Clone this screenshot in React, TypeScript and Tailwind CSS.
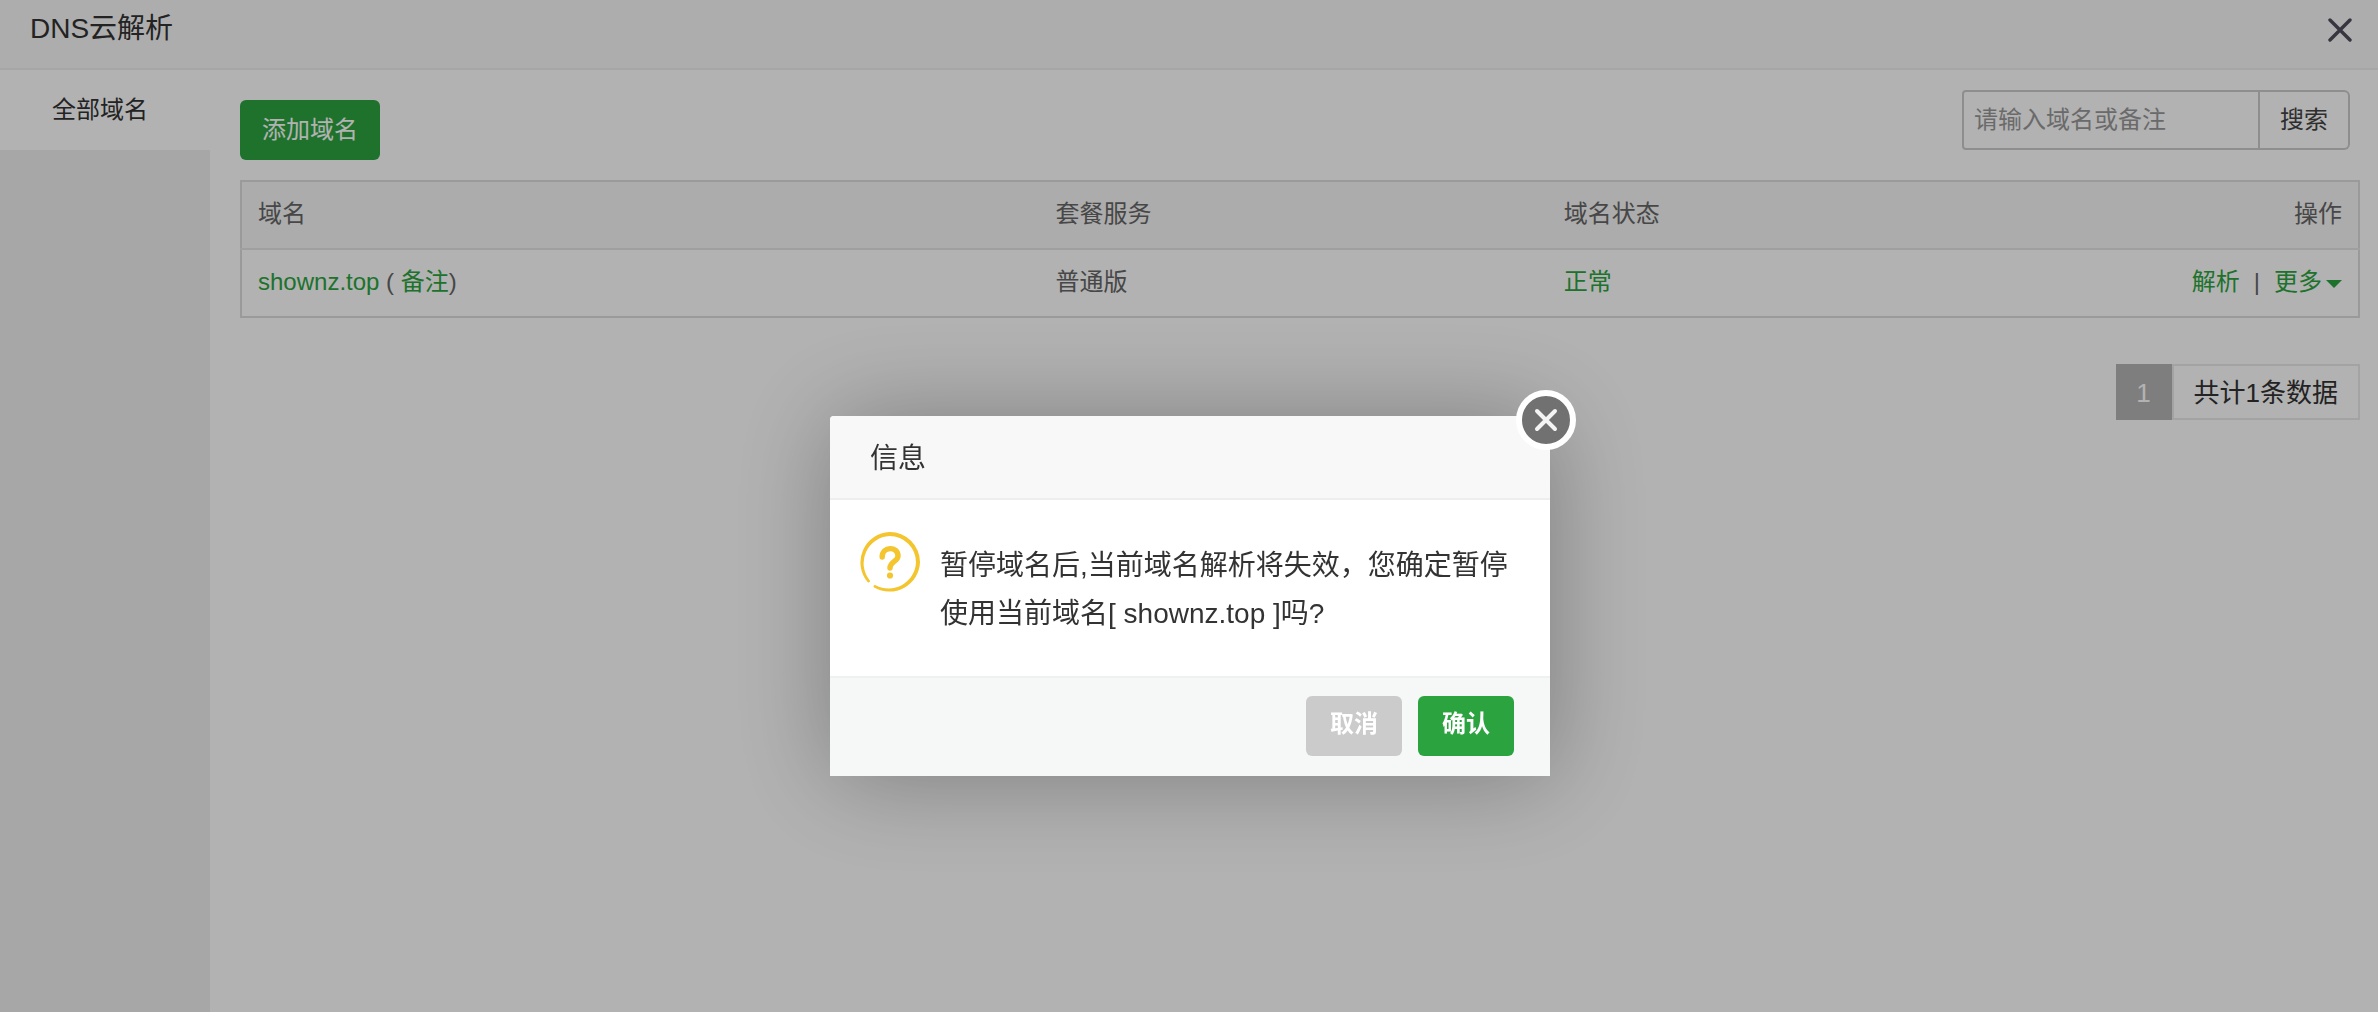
import React from "react";

function QuestionIcon() {
  return (
    <svg viewBox="0 0 60 60" className="size-[60px] shrink-0" aria-hidden="true">
      <path
        fill="#f4c52f"
        d="M9.6 48.2 A27.2 27.2 0 0 1 29.6 4 A26.4 26.4 0 0 1 56 30.4 A27.4 27.4 0 0 1 15.6 53.2 A1.3 1.3 0 0 0 14.2 55.4 A30.4 30.4 0 0 0 60 30 A30.2 30.2 0 0 0 29.6 0 A30.4 30.4 0 0 0 7.6 50 A1.3 1.3 0 0 0 9.6 48.2Z"
      />
      <path d="M22.2 25 C22.2 14 38 14 38 24 C38 29.5 30 29.5 30 36" fill="none" stroke="#f4c52f" strokeWidth="5.4" strokeLinecap="round" />
      <circle cx="30" cy="43.5" r="3.1" fill="#f4c52f" />
    </svg>
  );
}

function Dialog() {
  return (
    <div className="fixed inset-0 flex items-start justify-center bg-black/30 pt-[416px] pl-0.5">
      <section
        role="dialog"
        aria-modal="true"
        aria-labelledby="dialog-title"
        className="relative w-[720px] rounded-t bg-white text-[#333] shadow-[2px_2px_100px_rgba(0,0,0,0.3)]"
      >
        <h2 id="dialog-title" className="rounded-t border-b-2 border-[#eee] bg-[#f8f8f8] px-10 pt-[22px] pb-[18px] text-[28px] leading-[42px]">
          信息
        </h2>
        <div className="flex gap-5 px-[30px] pt-8 pb-[38px]">
          <QuestionIcon />
          <p className="pt-2.5 text-[28px] leading-[48px]">
            暂停域名后,当前域名解析将失效，您确定暂停使用当前域名[ shownz.top ]吗?
          </p>
        </div>
        <div className="flex justify-end gap-4 border-t-2 border-[#edf1f2] bg-[#f6f8f8] pt-[18px] pr-9 pb-5 text-2xl font-bold text-white">
          <button type="button" className="h-[60px] rounded-md bg-[#cbcbcb] px-6 pb-1">取消</button>
          <button type="button" className="h-[60px] rounded-md bg-[#2ba440] px-6 pb-1">确认</button>
        </div>
        <button type="button" aria-label="关闭" className="absolute -top-[26px] -right-[26px] size-[60px]">
          <svg viewBox="0 0 60 60" className="size-full" fill="none" stroke="#fff" aria-hidden="true">
            <circle cx="30" cy="30" r="27" fill="#717171" strokeWidth="6" />
            <path d="M21 21 39 39M39 21 21 39" stroke="#f4f4f4" strokeWidth="4" strokeLinecap="round" />
          </svg>
        </button>
      </section>
    </div>
  );
}

export default function App() {
  return (
    <div
      lang="zh-CN"
      className="flex min-h-screen flex-col bg-white font-['Liberation_Sans','Noto_Sans_CJK_SC',sans-serif] text-2xl text-[#333]"
    >
      <header className="flex h-[70px] items-start justify-between border-b-2 border-[#eee] bg-[#f8f8f8] px-[30px] pt-2">
        <h1 className="text-[28px] leading-[42px]">DNS云解析</h1>
        <button type="button" aria-label="关闭" className="-mr-3.5 p-2.5">
          <svg viewBox="0 0 24 24" className="size-6" fill="none" stroke="#4e4d5c" strokeWidth="3.4" strokeLinecap="round" aria-hidden="true">
            <path d="M2 2 22 22M22 2 2 22" />
          </svg>
        </button>
      </header>
      <div className="flex grow">
        <nav className="w-[210px] shrink-0 bg-[#f0f0f0]">
          <a href="#all" className="block bg-white pl-[52px] leading-[80px]">全部域名</a>
        </nav>
        <main className="min-w-0 grow pt-5 pr-[18px] pl-[30px]">
          <div className="flex items-start justify-between pr-2.5">
            <button type="button" className="mt-2.5 h-[60px] rounded-md bg-[#2ba440] px-[22px] text-white">添加域名</button>
            <form className="flex h-[60px]" onSubmit={(e) => e.preventDefault()}>
              <input
                type="text"
                aria-label="请输入域名或备注"
                placeholder="请输入域名或备注"
                className="w-[298px] rounded-l border-2 border-[#ccc] px-2.5 placeholder:text-[#999]"
              />
              <button type="submit" className="w-[90px] rounded-r-md border-2 border-l-0 border-[#ccc] text-[#444]">搜索</button>
            </form>
          </div>
          <table className="mt-5 w-full table-fixed border-collapse border-2 border-[#ddd] text-left text-[#666]">
            <thead className="bg-[#f6f6f6]">
              <tr className="h-[68px] border-b-2 border-[#e4e4e4]">
                <th className="w-[37.7%] px-4 pb-0.5 font-normal">域名</th>
                <th className="w-[24%] px-4 pb-0.5 font-normal">套餐服务</th>
                <th className="px-4 pb-0.5 font-normal">域名状态</th>
                <th className="px-4 pb-0.5 text-right font-normal">操作</th>
              </tr>
            </thead>
            <tbody>
              <tr className="h-[68px]">
                <td className="px-4 pb-0.5">
                  <a href="#domain" className="text-[#2ba440]">shownz.top</a> ( <a href="#note" className="text-[#2ba440]">备注</a>)
                </td>
                <td className="px-4 pb-0.5">普通版</td>
                <td className="px-4 pb-0.5 text-[#2ba440]">正常</td>
                <td className="px-4 pb-0.5">
                  <div className="flex items-center justify-end">
                    <a href="#resolve" className="text-[#2ba440]">解析</a>
                    <span className="mx-3.5">|</span>
                    <button type="button" className="flex items-center gap-1 text-[#2ba440]">
                      更多
                      <svg viewBox="0 0 16 12" className="h-3 w-4" fill="currentColor" aria-hidden="true">
                        <path d="M0 4H16L8 12Z" />
                      </svg>
                    </button>
                  </div>
                </td>
              </tr>
            </tbody>
          </table>
          <div className="mt-[46px] flex h-14 justify-end text-[26px] leading-[54px]">
            <span className="w-14 border-2 border-[#b5b5b5] bg-[#b5b5b5] text-center text-white">1</span>
            <span className="border-2 border-[#eaeaea] px-5">共计1条数据</span>
          </div>
        </main>
      </div>
      <Dialog />
    </div>
  );
}
